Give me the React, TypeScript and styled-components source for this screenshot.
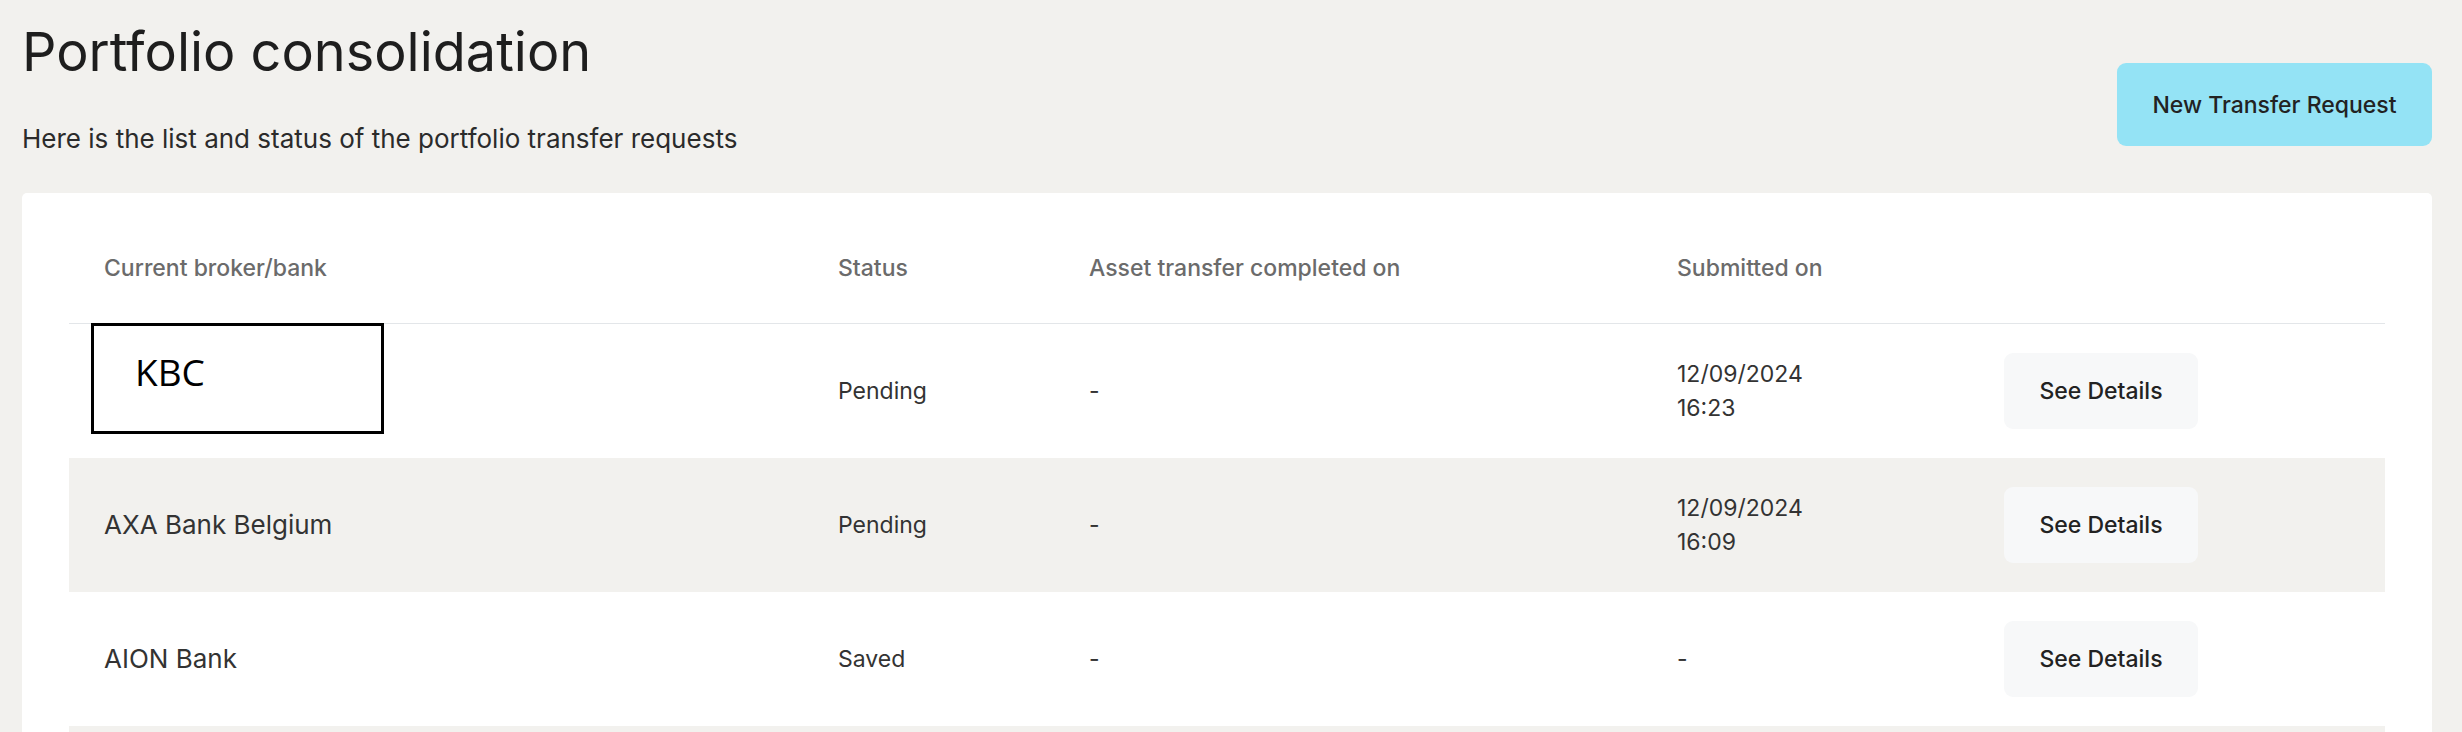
import styled, { createGlobalStyle } from "styled-components";

const GlobalStyle = createGlobalStyle`
  * {
    box-sizing: border-box;
  }
  body {
    margin: 0;
    background-color: #f2f1ee;
    font-family: Inter, "Liberation Sans", sans-serif;
    color: #2b2b2b;
  }
`;

const Page = styled.div`
  padding: 19px 30px 0 22px;
  min-height: 100vh;
`;

const Top = styled.div`
  display: flex;
  justify-content: space-between;
  align-items: flex-start;
`;

const Heading = styled.div`
  display: flex;
  flex-direction: column;
`;

const Title = styled.h1`
  margin: 0;
  font-size: 54px;
  font-weight: 400;
  line-height: 65px;
  color: #1e1e1e;
`;

const Subtitle = styled.p`
  margin: 39px 0 0;
  font-size: 26px;
  line-height: 31px;
  color: #2b2b2b;
`;

const PrimaryButton = styled.button`
  margin-top: 44px;
  width: 315px;
  height: 83px;
  border: none;
  border-radius: 9px;
  background-color: #94e3f5;
  font-family: inherit;
  font-size: 23px;
  font-weight: 500;
  color: #222;
  cursor: pointer;
`;

const Card = styled.div`
  margin-top: 39px;
  background-color: #fff;
  border-radius: 5px;
  padding: 0 47px;
`;

const Row = styled.div<{ $shaded?: boolean }>`
  position: relative;
  display: grid;
  grid-template-columns: 734px 251px 588px 327px 1fr;
  align-items: center;
  padding-left: 35px;
  height: 134px;
  background-color: ${(p) => (p.$shaded ? "#f2f1ee" : "transparent")};
`;

const HeaderRow = styled(Row)`
  height: 131px;
  align-items: start;
  padding-top: 61px;
  border-bottom: 1px solid #e3e6e9;
`;

const HeadCell = styled.div`
  font-size: 23px;
  font-weight: 500;
  line-height: 28px;
  color: #6b6b6b;
`;

const Cell = styled.div`
  font-size: 23px;
  line-height: 34px;
  color: #333;
`;

const BankName = styled.div`
  font-size: 26px;
  line-height: 34px;
  color: #333;
`;

const DetailsButton = styled.button`
  width: 194px;
  height: 76px;
  border: none;
  border-radius: 9px;
  background-color: #f7f8f9;
  font-family: inherit;
  font-size: 23px;
  font-weight: 500;
  color: #222;
  cursor: pointer;
`;

// redaction box drawn over the first bank name
const Mask = styled.div`
  position: absolute;
  left: 22px;
  top: -1px;
  width: 293px;
  height: 111px;
  border: 3px solid #000;
  background-color: #fff;
  padding: 27px 0 0 41px;
  font-family: "Open Sans", "Liberation Sans", sans-serif;
  font-size: 37px;
  line-height: 1;
  color: #000;
`;

type Transfer = {
  bank: string;
  status: string;
  completed: string;
  submitted: string[];
  masked?: boolean;
};

const transfers: Transfer[] = [
  { bank: "KBC", status: "Pending", completed: "-", submitted: ["12/09/2024", "16:23"], masked: true },
  { bank: "AXA Bank Belgium", status: "Pending", completed: "-", submitted: ["12/09/2024", "16:09"] },
  { bank: "AION Bank", status: "Saved", completed: "-", submitted: ["-"] },
  { bank: "", status: "", completed: "", submitted: [] },
];

export default function App() {
  return (
    <>
      <GlobalStyle />
      <Page>
        <Top>
          <Heading>
            <Title>Portfolio consolidation</Title>
            <Subtitle>Here is the list and status of the portfolio transfer requests</Subtitle>
          </Heading>
          <PrimaryButton>New Transfer Request</PrimaryButton>
        </Top>
        <Card>
          <HeaderRow>
            <HeadCell>Current broker/bank</HeadCell>
            <HeadCell>Status</HeadCell>
            <HeadCell>Asset transfer completed on</HeadCell>
            <HeadCell>Submitted on</HeadCell>
            <HeadCell />
          </HeaderRow>
          {transfers.map((t, i) => (
            <Row key={i} $shaded={i % 2 === 1}>
              {t.masked ? <Mask>{t.bank}</Mask> : <BankName>{t.bank}</BankName>}
              {t.masked && <span />}
              <Cell>{t.status}</Cell>
              <Cell>{t.completed}</Cell>
              <Cell>
                {t.submitted.map((line) => (
                  <div key={line}>{line}</div>
                ))}
              </Cell>
              <div>{t.bank && <DetailsButton>See Details</DetailsButton>}</div>
            </Row>
          ))}
        </Card>
      </Page>
    </>
  );
}
